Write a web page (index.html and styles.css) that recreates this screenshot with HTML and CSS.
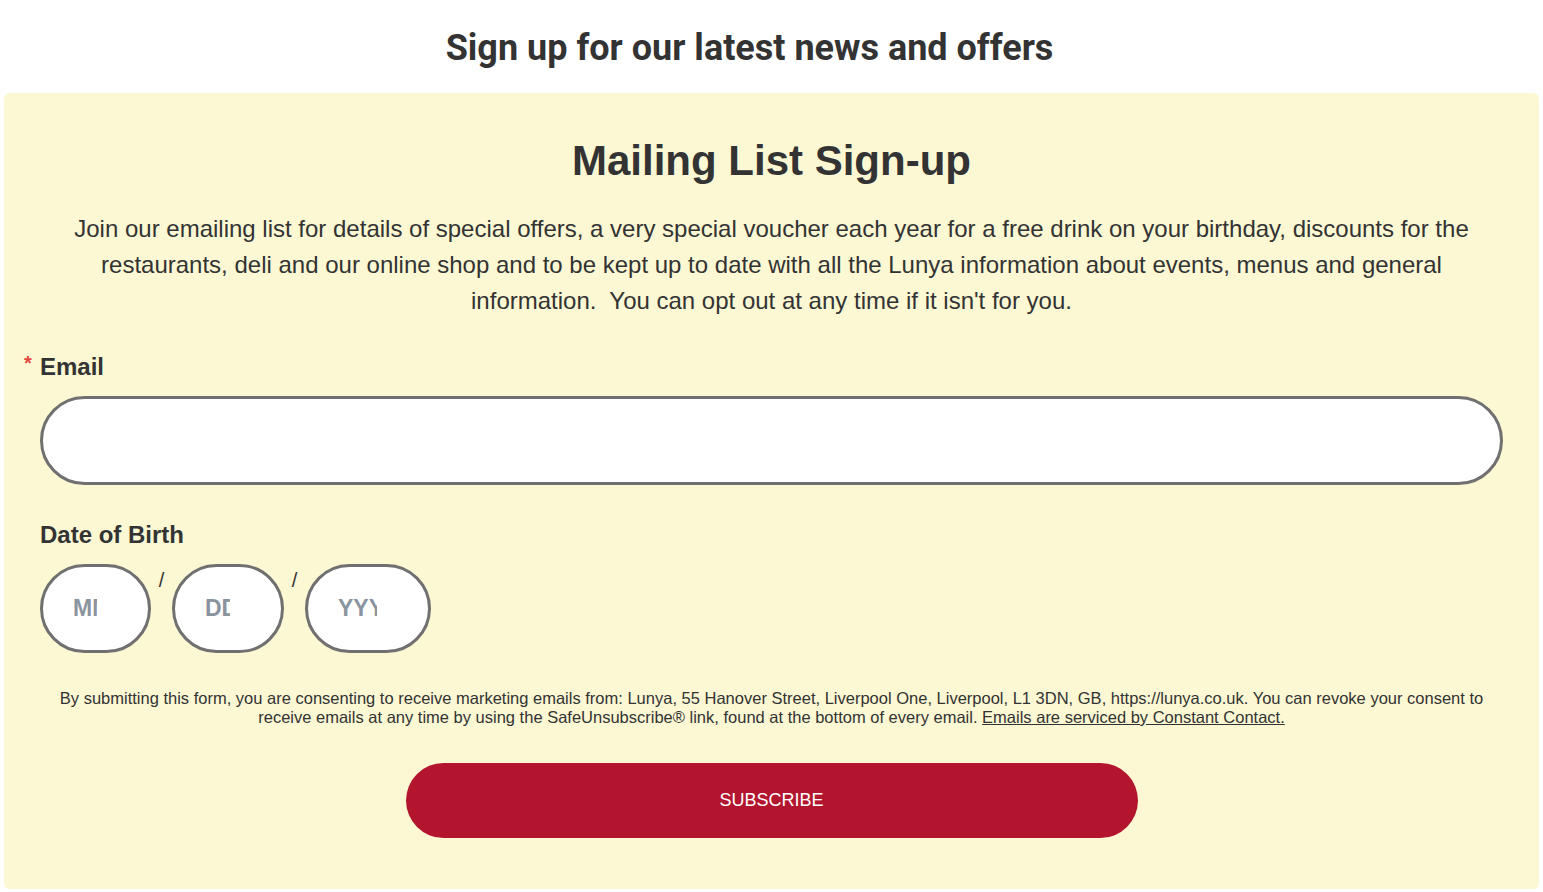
FILE: index.html
```html
<!DOCTYPE html>
<html lang="en">
<head>
    <meta charset="UTF-8">
    <meta name="viewport" content="width=device-width, initial-scale=1.0">
    <title>Sign up for our latest news and offers</title>
    <link rel="stylesheet" href="styles.css">
</head>
<body>
    <h2 class="page-title">Sign up for our latest news and offers</h2>

    <div class="signup-panel">
        <h1 class="form-title">Mailing List Sign-up</h1>
        <p class="form-intro">Join our emailing list for details of special offers, a very special voucher each year for a free drink on your birthday, discounts for the restaurants, deli and our online shop and to be kept up to date with all the Lunya information about events, menus and general information.&nbsp; You can opt out at any time if it isn't for you.</p>

        <form class="signup-form" onsubmit="return false;">
            <div class="field">
                <label for="email" class="field-label"><span class="required">*</span>Email</label>
                <input type="email" id="email" class="text-input">
            </div>

            <div class="field">
                <label class="field-label">Date of Birth</label>
                <div class="dob-row">
                    <input type="text" class="dob-input dob-mm" placeholder="MM" maxlength="2">
                    <span class="dob-sep">/</span>
                    <input type="text" class="dob-input dob-dd" placeholder="DD" maxlength="2">
                    <span class="dob-sep">/</span>
                    <input type="text" class="dob-input dob-yyyy" placeholder="YYYY" maxlength="4">
                </div>
            </div>

            <p class="consent">By submitting this form, you are consenting to receive marketing emails from: Lunya, 55 Hanover Street, Liverpool One, Liverpool, L1 3DN, GB, https://lunya.co.uk. You can revoke your consent to receive emails at any time by using the SafeUnsubscribe&reg; link, found at the bottom of every email. <a href="#">Emails are serviced by Constant Contact.</a></p>

            <div class="actions">
                <button type="submit" class="subscribe-btn">SUBSCRIBE</button>
            </div>
        </form>
    </div>
</body>
</html>
```

FILE: styles.css
```css
body {
    margin: 0;
    padding: 0 4px;
    background: #fff;
    color: #333;
    font-family: "Liberation Sans", Arial, sans-serif;
}
.page-title {
    font-family: Roboto, "Liberation Sans", sans-serif;
    font-weight: 700;
    font-size: 36px;
    line-height: 40px;
    text-align: center;
    margin: 0;
    padding: 28px 44px 25px 0;
    color: #333;
}
.signup-panel {
    background: #fcf8d4;
    border-radius: 6px;
    padding: 43px 36px 51px;
}
.form-title {
    font-size: 42px;
    line-height: 50px;
    font-weight: 700;
    text-align: center;
    margin: 0 0 25px;
}
.form-intro {
    font-size: 24px;
    line-height: 36px;
    text-align: center;
    margin: 0 0 33px;
}
.field {
    margin-bottom: 35px;
}
.field-label {
    display: block;
    font-size: 24px;
    line-height: 30px;
    font-weight: 700;
    margin-bottom: 14px;
}
.required {
    display: inline-block;
    width: 16px;
    margin-left: -16px;
    color: #e2463f;
    font-size: 20px;
    vertical-align: top;
    line-height: 22px;
}
.text-input {
    display: block;
    width: 100%;
    height: 89px;
    box-sizing: border-box;
    border: 3px solid #707070;
    border-radius: 45px;
    background: #fff;
    padding: 0 30px;
    font-size: 22px;
    font-family: inherit;
    outline: none;
}
.dob-row {
    display: flex;
    align-items: flex-start;
}
.dob-input {
    height: 89px;
    box-sizing: border-box;
    border: 3px solid #707070;
    border-radius: 45px;
    background: #fff;
    padding: 0 51px 0 30px;
    font-size: 23px;
    font-weight: 700;
    font-family: inherit;
    color: #333;
    outline: none;
}
.dob-input::placeholder {
    color: #8a949e;
}
.dob-mm { width: 111px; }
.dob-dd { width: 112px; }
.dob-yyyy { width: 126px; }
.dob-sep {
    width: 21px;
    text-align: center;
    font-size: 20px;
    line-height: 20px;
    padding-top: 6px;
}
.consent {
    font-size: 16.5px;
    line-height: 19px;
    text-align: center;
    margin: 36px 0 0;
}
.consent a {
    color: #333;
}
.actions {
    display: flex;
    justify-content: center;
    margin-top: 36px;
}
.subscribe-btn {
    width: 732px;
    height: 75px;
    background: #b3152f;
    color: #fff;
    border: none;
    border-radius: 38px;
    font-family: inherit;
    font-size: 18px;
    cursor: pointer;
}
```
